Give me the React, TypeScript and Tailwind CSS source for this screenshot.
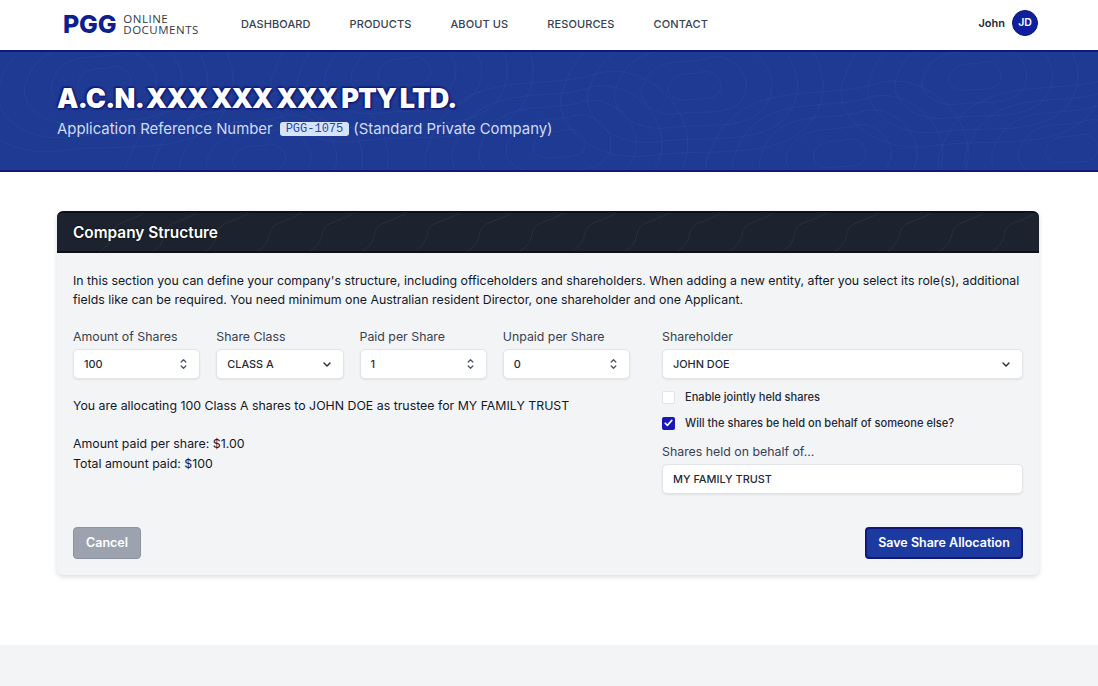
import React from 'react';

const NAV_ITEMS = ['Dashboard', 'Products', 'About us', 'Resources', 'Contact'];

const HERO_RINGS = [
  [90, 30], [250, 110], [400, 20], [560, 95], [700, 35], [850, 105], [990, 25], [1090, 100],
];

// faint contour rings behind the hero
const HeroTopo = () => (
  <svg className="absolute inset-0 w-full h-full pointer-events-none" viewBox="0 0 1098 122" fill="none" stroke="rgba(255,255,255,0.04)" strokeWidth="1">
    {HERO_RINGS.map(([cx, cy], i) =>
      [18, 36, 54, 72, 90].map(r => (
        <path
          key={`${i}-${r}`}
          d={`M${cx - r * 1.5} ${cy} C${cx - r * 1.2} ${cy - r * 0.9}, ${cx - r * 0.2} ${cy - r * 0.6}, ${cx + r * 0.4} ${cy - r * 0.8} S${cx + r * 1.7} ${cy - r * 0.3}, ${cx + r * 1.4} ${cy + r * 0.3} S${cx + r * 0.2} ${cy + r * 0.7}, ${cx - r * 0.5} ${cy + r * 0.8} S${cx - r * 1.7} ${cy + r * 0.4}, ${cx - r * 1.5} ${cy}Z`}
        />
      ))
    )}
  </svg>
);

// flowing lines behind the card title
const TitleTopo = () => (
  <svg className="absolute inset-0 w-full h-full pointer-events-none" viewBox="0 0 982 42" fill="none" stroke="rgba(255,255,255,0.07)" strokeWidth="1">
    {[0, 1, 2, 3, 4, 5, 6, 7, 8, 9, 10, 11, 12, 13, 14, 15, 16, 17].map(i => {
      const x = i * 58;
      return <path key={i} d={`M${x - 10} 46 C${x + 20} 30, ${x} 18, ${x + 22} 10 S${x + 44} 0, ${x + 48} -4`} />;
    })}
  </svg>
);

const Spinner = () => (
  <svg width="7" height="12" viewBox="0 0 7 12" fill="none" stroke="#4b5563" strokeWidth="1.3" strokeLinecap="round" strokeLinejoin="round">
    <path d="M1.2 4 3.5 1.8 5.8 4" />
    <path d="M1.2 8 3.5 10.2 5.8 8" />
  </svg>
);

const Chevron = () => (
  <svg width="8" height="5" viewBox="0 0 8 5" fill="none" stroke="#1f2937" strokeWidth="1.4" strokeLinecap="round" strokeLinejoin="round">
    <path d="M1 1l3 3 3-3" />
  </svg>
);

const Field: React.FC<{ label: string; value: string; kind?: 'number' | 'select' | 'text'; className?: string }> = ({
  label,
  value,
  kind = 'text',
  className = '',
}) => (
  <div className={className}>
    <div className="text-[12.35px] leading-[18px] text-[#374151] mt-[1px] mb-[3px]">{label}</div>
    <div className="h-[30px] bg-white rounded-[5px] border border-[#e2e4e9] shadow-[0_1px_2px_rgba(0,0,0,0.08)] flex items-center justify-between pl-[10px] pr-[12px] text-[10.9px] font-medium text-[#1f2937]">
      <span>{value}</span>
      {kind === 'number' && <Spinner />}
      {kind === 'select' && <Chevron />}
    </div>
  </div>
);

export default function App() {
  return (
    <div className="min-h-[686px] bg-white flex flex-col font-['Inter',sans-serif]">
      <header className="h-[50px] bg-white flex items-center pl-[63px] pr-[60px] pb-[2px]">
        <div className="flex items-center w-[178px]">
          <span className="text-[25px] leading-none font-extrabold text-[#101f8e] tracking-[-0.2px]">PGG</span>
          <span className="ml-[7px] text-[11.5px] leading-[11px] text-[#33394a] font-medium tracking-[0.5px] font-['Open_Sans',sans-serif]">
            ONLINE
            <br />
            DOCUMENTS
          </span>
        </div>
        <nav className="flex gap-[39px]">
          {NAV_ITEMS.map(item => (
            <a key={item} className="text-[11px] font-medium uppercase tracking-[0.1px] text-[#374151]">
              {item}
            </a>
          ))}
        </nav>
        <div className="ml-auto flex items-center gap-[7px] mb-[2px]">
          <span className="text-[11px] font-semibold text-[#1f2937]">John</span>
          <span className="w-[26px] h-[26px] rounded-full bg-[#101f9e] border border-[#0b1570] text-white text-[10.5px] font-semibold flex items-center justify-center">
            JD
          </span>
        </div>
      </header>

      <section className="relative h-[122px] bg-[#1f3a93] border-y-[2px] border-[#10187a] overflow-hidden pl-[57px] pt-[30px]">
        <HeroTopo />
        <h1 className="relative text-[27px] leading-[34px] font-black text-white tracking-[-0.75px] [word-spacing:-1px] [text-shadow:0_0_3px_#0b1570,1px_1px_2px_#0b1570,-1px_-1px_2px_#0b1570]">
          A.C.N. XXX XXX XXX PTY LTD.
        </h1>
        <p className="relative flex items-center text-[14.9px] leading-[20px] text-[#cfdcf5] mt-[3px]">
          Application Reference Number
          <code className="ml-[7px] mr-[4px] px-[6px] h-[14px] leading-[14px] rounded-[3px] bg-[#d6e4fb] text-[#2a4aa0] text-[12px] font-['Liberation_Mono',monospace] font-normal">
            PGG-1075
          </code>
          (Standard Private Company)
        </p>
      </section>

      <main className="flex-1 pl-[57px] pr-[59px] pt-[39px] pb-[70px]">
        <div className="rounded-[6px] bg-[#f3f4f6] shadow-[0_2px_5px_rgba(0,0,0,0.14)]">
          <div className="relative h-[42px] rounded-t-[6px] bg-[#1c232e] border-y-[2px] border-[#0d1119] overflow-hidden flex items-center px-[16px]">
            <TitleTopo />
            <h2 className="relative text-[15.4px] font-semibold text-white pt-[2px] [text-shadow:0_0_2px_#000]">Company Structure</h2>
          </div>

          <div className="px-[16px] pt-[18px] pb-[16px]">
            <p className="text-[12.35px] leading-[19px] text-[#111827]">
              In this section you can define your company's structure, including officeholders and shareholders. When adding a new entity, after you select its role(s), additional fields like can be required. You need minimum one Australian resident Director, one shareholder and one Applicant.
            </p>

            <div className="flex justify-between mt-[18px]">
              <div className="w-[557px]">
                <div className="grid grid-cols-4 gap-[16px]">
                  <Field label="Amount of Shares" value="100" kind="number" />
                  <Field label="Share Class" value="CLASS A" kind="select" />
                  <Field label="Paid per Share" value="1" kind="number" />
                  <Field label="Unpaid per Share" value="0" kind="number" />
                </div>
                <p className="mt-[17px] text-[12.35px] leading-[19px] text-[#111827]">
                  You are allocating 100 Class A shares to JOHN DOE as trustee for MY FAMILY TRUST
                </p>
                <p className="mt-[19px] text-[12.35px] leading-[20px] text-[#111827]">
                  Amount paid per share: $1.00
                  <br />
                  Total amount paid: $100
                </p>
              </div>

              <div className="w-[361px]">
                <Field label="Shareholder" value="JOHN DOE" kind="select" />
                <label className="flex items-center mt-[11px] h-[14px] text-[11.1px] font-medium text-[#1f2937]">
                  <span className="w-[13px] h-[13px] rounded-[2px] bg-white border border-[#e2e4e9] mr-[10px]" />
                  Enable jointly held shares
                </label>
                <label className="flex items-center mt-[12px] h-[14px] text-[11.1px] font-medium text-[#1f2937]">
                  <span className="w-[13px] h-[13px] rounded-[2px] bg-[#1a17b8] mr-[10px] flex items-center justify-center">
                    <svg width="9" height="8" viewBox="0 0 9 8" fill="none" stroke="white" strokeWidth="1.6" strokeLinecap="round" strokeLinejoin="round">
                      <path d="M1.2 4.2 3.4 6.4 7.8 1.4" />
                    </svg>
                  </span>
                  Will the shares be held on behalf of someone else?
                </label>
                <Field label="Shares held on behalf of..." value="MY FAMILY TRUST" className="mt-[13px]" />
              </div>
            </div>

            <div className="flex justify-between items-center mt-[33px]">
              <button className="h-[32px] w-[68px] rounded-[4px] bg-[#9ca3af] border border-[#8b93a0] text-white text-[12.5px] font-semibold">
                Cancel
              </button>
              <button className="h-[32px] w-[158px] rounded-[4px] bg-[#1c3aa0] border-[2px] border-[#10187a] text-white text-[12.5px] font-semibold">
                Save Share Allocation
              </button>
            </div>
          </div>
        </div>
      </main>

      <footer className="h-[41px] bg-[#f3f4f6]" />
    </div>
  );
}
